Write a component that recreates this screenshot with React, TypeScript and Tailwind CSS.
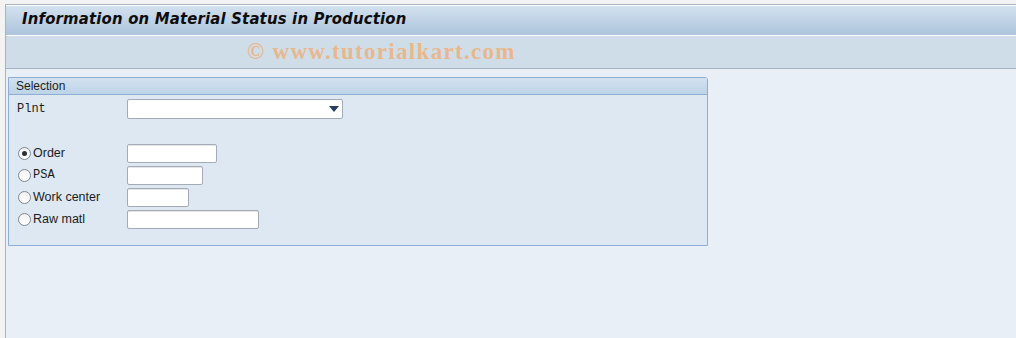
import React from "react"

/* ─── small pieces ─── */
const Radio = ({ on }: { on?: boolean }) => (
    <span className="w-[13px] h-[13px] rounded-full border border-[#7d8893] bg-gradient-to-b from-[#f2f2f2] to-white flex items-center justify-center shrink-0">
        {on && <span className="w-[5px] h-[5px] rounded-full bg-[#2b2f36]" />}
    </span>
)

const Field = ({ w }: { w: string }) => (
    <div className={`${w} h-[19px] bg-white border border-[#a3acb6] rounded-[2px] shadow-[inset_0_1px_0_#e6e6e6]`} />
)

const rows = [
    { label: "Order", on: true, w: "w-[90px]", mono: false },
    { label: "PSA", on: false, w: "w-[76px]", mono: true },
    { label: "Work center", on: false, w: "w-[62px]", mono: false },
    { label: "Raw matl", on: false, w: "w-[132px]", mono: false },
]

export default function App() {
    return (
        <div className="w-[1016px] h-[338px] bg-[#f3f3f3] pt-[4px] pl-[5px] overflow-hidden font-['Liberation_Sans',sans-serif]">
            <div className="h-full flex flex-col border-l border-t border-[#a9b3bf]">

                {/* ── Title bar ── */}
                <div className="h-[31px] shrink-0 border-t border-white border-b bg-gradient-to-b from-[#d3e1ee] to-[#adc4dc] flex items-center pl-[16px] pb-[3px]">
                    <span className="text-[16px] font-bold italic text-[#0d0d0d] tracking-[0.2px] font-['DejaVu_Sans',sans-serif] scale-x-[0.93] origin-left">
                        Information on Material Status in Production
                    </span>
                </div>

                {/* ── Toolbar ── */}
                <div className="h-[33px] shrink-0 bg-[#cfdde8] border-b border-[#a5b3c3] flex items-center pl-[241px] pb-[1px]">
                    <span className="text-[23px] font-bold text-[#e8b88c] font-['Liberation_Serif',serif] leading-none tracking-[1.3px]">
                        © www.tutorialkart.com
                    </span>
                </div>

                {/* ── Content ── */}
                <div className="flex-1 bg-[#e8eff7] pt-[8px] pl-[2px]">
                    <div className="w-[700px] border border-[#8eaed2] rounded-tr-[3px] bg-[#dde8f3]">
                        <div className="h-[17px] bg-gradient-to-b from-[#d2e1ef] to-[#bed3e8] border-b border-[#8eaed2] flex items-center pl-[7px]">
                            <span className="text-[12px] text-[#1c1c1c]">Selection</span>
                        </div>

                        <div className="pt-[4px] pb-[15px] pl-[8px] flex flex-col">
                            {/* Plnt */}
                            <div className="h-[20px] flex items-center">
                                <span className="w-[110px] text-[12px] text-[#1c1c1c] font-['Liberation_Mono',monospace]">Plnt</span>
                                <div className="w-[216px] h-[20px] bg-white border border-[#a3acb6] rounded-[2px] flex items-center justify-end pr-[3px]">
                                    <svg width="10" height="6" viewBox="0 0 10 6">
                                        <path d="M0 0 H10 L5 6 Z" fill="#233d63" />
                                    </svg>
                                </div>
                            </div>

                            <div className="h-[23px]" />

                            {rows.map((r) => (
                                <div key={r.label} className="h-[22px] flex items-center">
                                    <div className="w-[110px] flex items-center gap-[2px] pl-[1px]">
                                        <Radio on={r.on} />
                                        <span className={r.mono ? "text-[12px] text-[#1c1c1c] font-['Liberation_Mono',monospace]" : "text-[12.5px] text-[#1c1c1c]"}>
                                            {r.label}
                                        </span>
                                    </div>
                                    <Field w={r.w} />
                                </div>
                            ))}
                        </div>
                    </div>
                </div>
            </div>
        </div>
    )
}
